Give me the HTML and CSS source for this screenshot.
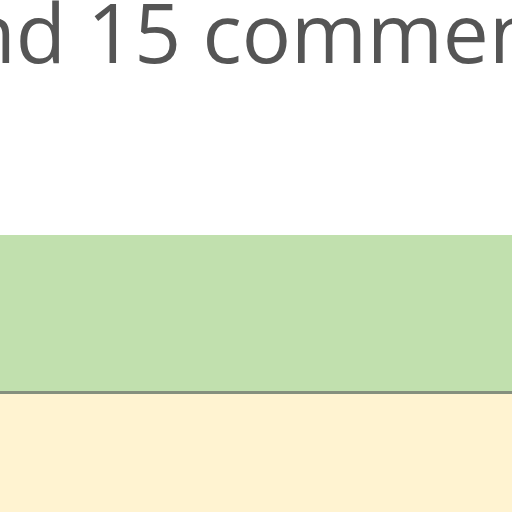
FILE: index.html
```html
<!DOCTYPE html>
<html>
<head>
<meta charset="utf-8">
<link rel="stylesheet" href="styles.css">
</head>
<body>
<div class="page">
  <div class="title">and 15 comments</div>
  <div class="spacer"></div>
  <div class="band-green"></div>
  <div class="band-cream"></div>
</div>
</body>
</html>
```
FILE: styles.css
```css
html, body {
  margin: 0;
  padding: 0;
  background: #ffffff;
  overflow: hidden;
}
.page {
  width: 512px;
  height: 512px;
  display: flex;
  flex-direction: column;
  overflow: hidden;
}
.title {
  font-family: "Open Sans", sans-serif;
  font-size: 82px;
  line-height: 82px;
  color: #555555;
  white-space: nowrap;
  margin-left: -80px;
  margin-top: -10px;
}
.spacer {
  height: 163px;
}
.band-green {
  height: 156px;
  background: #c1e0ae;
  border-bottom: 3px solid #858f7e;
}
.band-cream {
  flex: 1;
  background: #fff3d1;
}
```
